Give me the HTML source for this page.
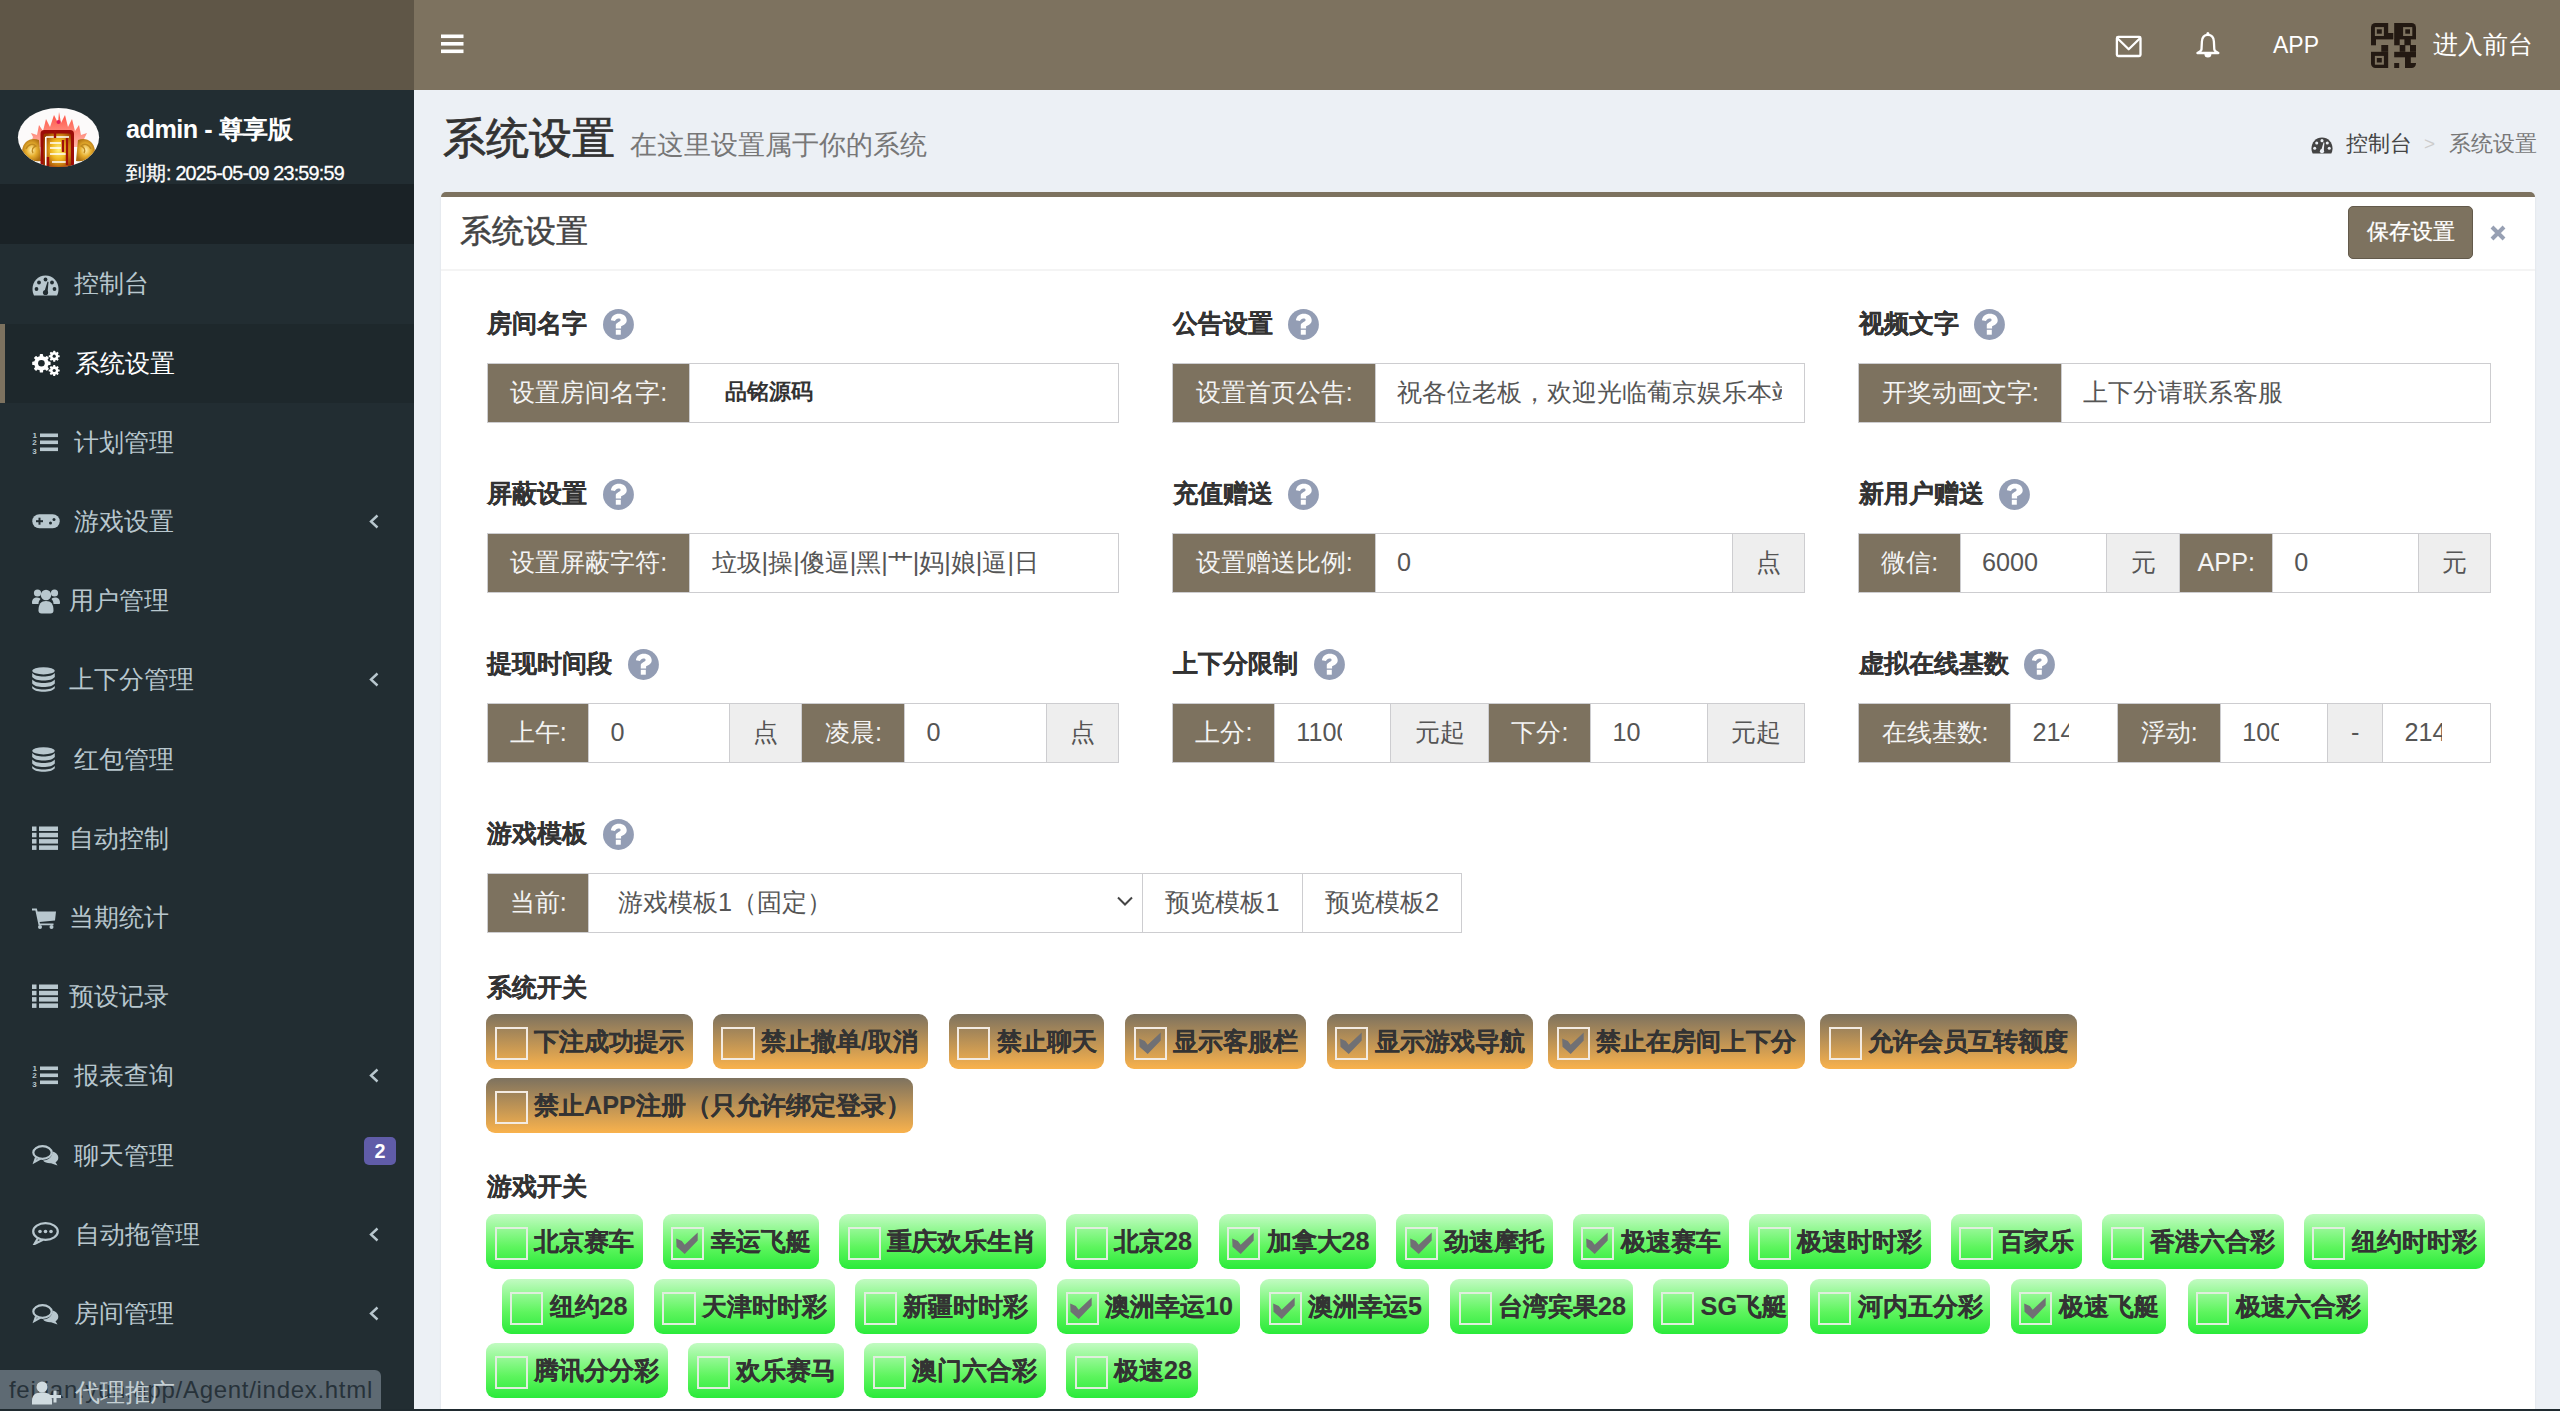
<!DOCTYPE html>
<html><head><meta charset="utf-8"><style>
*{box-sizing:border-box;margin:0;padding:0}
html,body{width:2560px;height:1411px;overflow:hidden;background:#ecf0f5;font-family:"Liberation Sans",sans-serif;color:#333;position:relative}
.a{position:absolute}
#logo{left:0;top:0;width:414px;height:90px;background:#5f5647}
#nav{left:414px;top:0;width:2146px;height:90px;background:#7d725f}
#side{left:0;top:90px;width:414px;height:1321px;background:#222d32}
#strip{left:0;top:184px;width:414px;height:60px;background:#1a2226}
.mi{position:absolute;left:0;width:414px;height:79.2px;color:#b8c7ce;font-size:25.2px;line-height:79.2px;white-space:nowrap}
.mi .t{position:absolute;top:0}
.mi svg{position:absolute}
.mi.act{background:#1e282c;color:#fff}
.mi.act:before{content:"";position:absolute;left:0;top:0;width:5.4px;height:100%;background:#7d725f}
#box{left:441px;top:191.7px;width:2093.6px;height:1300px;background:#fff;border-top:5.4px solid #7d725f;border-radius:5px 5px 0 0;box-shadow:0 1.8px 1.8px rgba(0,0,0,0.1)}
.lbl{position:absolute;font-size:25.2px;font-weight:bold;color:#333;-webkit-text-stroke:0.15px #333;line-height:30px;white-space:nowrap}
.q{position:absolute}
.ig>div{position:absolute;height:60px;border:1.8px solid #cdcdd0;font-size:25.2px;line-height:56px;white-space:nowrap;overflow:hidden}
.ad{background:#7d725f;color:#f4f4f4;text-align:center}
.ip{background:#fff;color:#555}
.gy{background:#eee;color:#555;text-align:center}
.tg{position:absolute;height:54.7px;border-radius:9px;font-size:25.2px;font-weight:bold;color:#333;-webkit-text-stroke:0.1px #333;line-height:54.7px;white-space:nowrap}
.tg.o{background:linear-gradient(to bottom,#7d725f 0%,#f9b24c 100%)}
.tg.g{background:linear-gradient(to bottom,#c2fbc2 0%,#5ef55e 60%,#2aea3a 100%)}
.tg .cb{position:absolute;left:8.5px;top:13.2px;width:33.3px;height:32.6px;border:2.2px solid #f3ebe2}
.tg.g .cb{border-color:#dfeedd}
.tg .tx{position:absolute;left:48px;top:0}
</style></head><body>
<div id="logo" class="a"></div><div id="nav" class="a"></div>
<svg class="a" style="left:441px;top:34px" width="23" height="20" viewBox="0 0 23 20"><rect x="0" y="0.5" width="22.5" height="3.6" fill="#fff"/><rect x="0" y="8" width="22.5" height="3.6" fill="#fff"/><rect x="0" y="15.5" width="22.5" height="3.6" fill="#fff"/></svg>
<svg class="a" style="left:2115px;top:35px" width="28" height="23" viewBox="0 0 28 23"><rect x="1.9" y="1.9" width="23.6" height="19.1" rx="1.3" fill="none" stroke="#fff" stroke-width="2.3"/><path d="M2.4 3.2 L13.7 14.3 L25 3.2" fill="none" stroke="#fff" stroke-width="2.3" stroke-linejoin="round"/></svg>
<svg class="a" style="left:2195px;top:31px" width="27" height="28" viewBox="0 0 27 28"><path d="M12.9 3.8 C9.2 3.8 7.1 6.2 6.9 10.5 L6.5 18.3 C6.3 19.8 4.3 21 2.4 22 L23.4 22 C21.5 21 19.5 19.8 19.3 18.3 L18.9 10.5 C18.7 6.2 16.6 3.8 12.9 3.8 Z" fill="none" stroke="#fff" stroke-width="2.3" stroke-linejoin="round"/><circle cx="12.9" cy="2.6" r="1.5" fill="#fff"/><path d="M9.4 23 A3.5 3.5 0 0 0 16.4 23 Z" fill="#fff"/></svg>
<div class="a" style="left:2273px;top:29px;font-size:23px;line-height:32px;color:#fff">APP</div>
<svg class="a" style="left:2371px;top:23px" width="45" height="45" viewBox="0 0 45 45"><defs><clipPath id="qc"><rect x="0" y="0" width="45" height="45" rx="4.5"/></clipPath></defs><g clip-path="url(#qc)" fill="#231912">
<rect x="0" y="0" width="17.2" height="10"/><rect x="0" y="10" width="22.3" height="6.4"/><rect x="0" y="16" width="5" height="6.3"/>
<rect x="23.2" y="0" width="21.8" height="16.4"/><rect x="23.2" y="16" width="5.5" height="6.3"/><rect x="33.4" y="16" width="6.4" height="6.3"/>
<rect x="10.3" y="22" width="6.9" height="6.8"/><rect x="28.7" y="22" width="5.6" height="6.8"/><rect x="39" y="22" width="6" height="6.8"/>
<rect x="0" y="28.8" width="17.2" height="16.2"/>
<rect x="23.2" y="28.8" width="21.8" height="5.5"/><rect x="34" y="34" width="5.8" height="6.2"/><rect x="23.2" y="40" width="5" height="5"/><rect x="34" y="40" width="11" height="5"/>
</g><g fill="#7d725f"><rect x="3.9" y="4.1" width="9" height="8.9"/><rect x="32.1" y="4.1" width="9.2" height="8.9"/><rect x="3.9" y="32.9" width="9" height="8.8"/></g>
<g fill="#231912"><rect x="5.8" y="6.3" width="5" height="4.4"/><rect x="34.3" y="6.3" width="4.7" height="4.4"/><rect x="5.8" y="35" width="5" height="4.5"/></g></svg>
<div class="a" style="left:2433px;top:26px;font-size:25.2px;line-height:36px;color:#fff">进入前台</div>
<div id="side" class="a"></div><div id="strip" class="a"></div>
<svg class="a" style="left:17px;top:107px" width="83" height="61" viewBox="0 0 83 61">
<defs><clipPath id="avc"><ellipse cx="41.5" cy="30.5" rx="40.6" ry="29.6"/></clipPath>
<radialGradient id="gold" cx="55%" cy="45%" r="60%"><stop offset="0" stop-color="#fff27a"/><stop offset="0.45" stop-color="#f0b820"/><stop offset="1" stop-color="#9a3a00"/></radialGradient>
<linearGradient id="flm" x1="0" y1="0" x2="0" y2="1"><stop offset="0" stop-color="#ff3a2a"/><stop offset="1" stop-color="#ffb0a0"/></linearGradient>
<radialGradient id="orn" cx="50%" cy="50%" r="55%"><stop offset="0" stop-color="#fff0b0"/><stop offset="0.5" stop-color="#e8b030"/><stop offset="1" stop-color="#b07010"/></radialGradient></defs>
<g clip-path="url(#avc)">
<rect x="0" y="0" width="83" height="61" fill="#fcfafa"/>
<path d="M12 40 L16 30 L14 26 L20 28 L22 18 L26 24 L29 12 L33 20 L37 8 L41 16 L42 5 L44 16 L48 8 L51 20 L55 12 L58 24 L62 18 L64 28 L70 26 L67 32 L71 40 Z" fill="url(#flm)" opacity="0.9"/>
<path d="M5 44 C6 34 14 30 22 33 L24 54 C15 55 8 52 5 44 Z" fill="url(#orn)"/>
<path d="M78 44 C77 34 69 30 61 33 L59 54 C68 55 75 52 78 44 Z" fill="url(#orn)"/>
<path d="M9 42 C11 37 16 36 19 39 C16 40 14 43 16 46" stroke="#c08a20" stroke-width="1.4" fill="none"/>
<path d="M74 42 C72 37 67 36 64 39 C67 40 69 43 67 46" stroke="#c08a20" stroke-width="1.4" fill="none"/>
<rect x="23.5" y="23" width="33.5" height="40" rx="4" fill="#9c0c08"/>
<rect x="26.5" y="26.5" width="27.5" height="36" rx="2" fill="url(#gold)"/>
<path d="M28.8 30 L28.8 62 M28.8 30 L52 30 M33 36 L44 36 M33 41 L44 41 M33 47 L50 47 M35 55 L50 55" stroke="#fff" stroke-width="1.6" fill="none"/>
<path d="M38 24 L38 31 M46 33 L46 45 M50 31 L50 58 M31 50 L31 60" stroke="#a01008" stroke-width="2.4" fill="none"/>
<circle cx="41.5" cy="15" r="2" fill="#e0205a"/>
</g></svg>
<div class="a" style="left:126px;top:113px;font-size:25.2px;font-weight:bold;line-height:32px;color:#fff;white-space:nowrap;letter-spacing:-0.5px">admin - 尊享版</div>
<div class="a" style="left:126px;top:160px;font-size:19.8px;line-height:26px;color:#fff;white-space:nowrap;letter-spacing:-0.8px;-webkit-text-stroke:0.3px #fff"><span style="letter-spacing:0">到期</span>: 2025-05-09 23:59:59</div>
<div class="mi" style="top:244.3px"><span class="t" style="left:74px">控制台</span></div>
<svg class="a" style="left:32px;top:275.4px" width="27" height="21" viewBox="0 0 27 21"><path d="M13.5 0.5 C6 0.5 0.5 6.5 0.5 14 C0.5 16.5 1 18.5 2 20.5 L25 20.5 C26 18.5 26.5 16.5 26.5 14 C26.5 6.5 21 0.5 13.5 0.5 Z" fill="#b8c7ce"/><g fill="#222d32"><circle cx="4.5" cy="14" r="1.9"/><circle cx="7" cy="7.5" r="1.9"/><circle cx="13.5" cy="4.5" r="1.9"/><circle cx="20" cy="7.5" r="1.9"/><circle cx="22.5" cy="14" r="1.9"/><path d="M12 18 L15.5 6.5 L16.5 7 L15.5 18.5 Z"/><circle cx="13.5" cy="17.5" r="2.6"/></g></svg>
<div class="mi act" style="top:323.5px"><span class="t" style="left:75px">系统设置</span></div>
<svg class="a" style="left:32px;top:350.1px" width="28" height="26" viewBox="0 0 28 26"><circle cx="9.4" cy="13.3" r="7.3" fill="#fff"/><rect x="7.70" y="4.10" width="3.4" height="3.40" rx="0.85" fill="#fff" transform="rotate(0.0 9.4 13.3)"/><rect x="7.70" y="4.10" width="3.4" height="3.40" rx="0.85" fill="#fff" transform="rotate(45.0 9.4 13.3)"/><rect x="7.70" y="4.10" width="3.4" height="3.40" rx="0.85" fill="#fff" transform="rotate(90.0 9.4 13.3)"/><rect x="7.70" y="4.10" width="3.4" height="3.40" rx="0.85" fill="#fff" transform="rotate(135.0 9.4 13.3)"/><rect x="7.70" y="4.10" width="3.4" height="3.40" rx="0.85" fill="#fff" transform="rotate(180.0 9.4 13.3)"/><rect x="7.70" y="4.10" width="3.4" height="3.40" rx="0.85" fill="#fff" transform="rotate(225.0 9.4 13.3)"/><rect x="7.70" y="4.10" width="3.4" height="3.40" rx="0.85" fill="#fff" transform="rotate(270.0 9.4 13.3)"/><rect x="7.70" y="4.10" width="3.4" height="3.40" rx="0.85" fill="#fff" transform="rotate(315.0 9.4 13.3)"/><circle cx="9.4" cy="13.3" r="3.3" fill="#1e282c"/><circle cx="22.2" cy="6.2" r="4.2" fill="#fff"/><rect x="21.15" y="0.70" width="2.1" height="2.80" rx="0.53" fill="#fff" transform="rotate(0.0 22.2 6.2)"/><rect x="21.15" y="0.70" width="2.1" height="2.80" rx="0.53" fill="#fff" transform="rotate(45.0 22.2 6.2)"/><rect x="21.15" y="0.70" width="2.1" height="2.80" rx="0.53" fill="#fff" transform="rotate(90.0 22.2 6.2)"/><rect x="21.15" y="0.70" width="2.1" height="2.80" rx="0.53" fill="#fff" transform="rotate(135.0 22.2 6.2)"/><rect x="21.15" y="0.70" width="2.1" height="2.80" rx="0.53" fill="#fff" transform="rotate(180.0 22.2 6.2)"/><rect x="21.15" y="0.70" width="2.1" height="2.80" rx="0.53" fill="#fff" transform="rotate(225.0 22.2 6.2)"/><rect x="21.15" y="0.70" width="2.1" height="2.80" rx="0.53" fill="#fff" transform="rotate(270.0 22.2 6.2)"/><rect x="21.15" y="0.70" width="2.1" height="2.80" rx="0.53" fill="#fff" transform="rotate(315.0 22.2 6.2)"/><circle cx="22.2" cy="6.2" r="1.6" fill="#1e282c"/><circle cx="22.2" cy="20.5" r="4.2" fill="#fff"/><rect x="21.15" y="15.00" width="2.1" height="2.80" rx="0.53" fill="#fff" transform="rotate(0.0 22.2 20.5)"/><rect x="21.15" y="15.00" width="2.1" height="2.80" rx="0.53" fill="#fff" transform="rotate(45.0 22.2 20.5)"/><rect x="21.15" y="15.00" width="2.1" height="2.80" rx="0.53" fill="#fff" transform="rotate(90.0 22.2 20.5)"/><rect x="21.15" y="15.00" width="2.1" height="2.80" rx="0.53" fill="#fff" transform="rotate(135.0 22.2 20.5)"/><rect x="21.15" y="15.00" width="2.1" height="2.80" rx="0.53" fill="#fff" transform="rotate(180.0 22.2 20.5)"/><rect x="21.15" y="15.00" width="2.1" height="2.80" rx="0.53" fill="#fff" transform="rotate(225.0 22.2 20.5)"/><rect x="21.15" y="15.00" width="2.1" height="2.80" rx="0.53" fill="#fff" transform="rotate(270.0 22.2 20.5)"/><rect x="21.15" y="15.00" width="2.1" height="2.80" rx="0.53" fill="#fff" transform="rotate(315.0 22.2 20.5)"/><circle cx="22.2" cy="20.5" r="1.6" fill="#1e282c"/></svg>
<div class="mi" style="top:402.7px"><span class="t" style="left:74px">计划管理</span></div>
<svg class="a" style="left:32px;top:429.8px" width="26" height="25" viewBox="0 0 26 25"><g fill="#b8c7ce"><rect x="8" y="3.5" width="18" height="3.6"/><rect x="8" y="10.5" width="18" height="3.6"/><rect x="8" y="17.5" width="18" height="3.6"/></g><text x="0.5" y="7.5" font-size="8" font-weight="bold" fill="#b8c7ce" font-family="Liberation Sans">1</text><text x="0.3" y="15" font-size="8" font-weight="bold" fill="#b8c7ce" font-family="Liberation Sans">2</text><text x="0.3" y="23.5" font-size="8" font-weight="bold" fill="#b8c7ce" font-family="Liberation Sans">3</text></svg>
<div class="mi" style="top:481.9px"><span class="t" style="left:74px">游戏设置</span></div>
<svg class="a" style="left:32px;top:514.0px" width="28" height="15" viewBox="0 0 28 15"><rect x="0.3" y="0.3" width="27.4" height="14" rx="7" fill="#b8c7ce"/><g fill="#222d32"><rect x="4" y="6.2" width="7" height="2"/><rect x="6.5" y="3.7" width="2" height="7"/><circle cx="18.5" cy="9" r="1.5"/><circle cx="22" cy="5.5" r="1.5"/></g></svg>
<svg class="a" style="left:369px;top:514.0px" width="10" height="15" viewBox="0 0 10 15"><path d="M8.5 1.5 L2 7.5 L8.5 13.5" fill="none" stroke="#b8c7ce" stroke-width="2.4"/></svg>
<div class="mi" style="top:561.1px"><span class="t" style="left:69px">用户管理</span></div>
<svg class="a" style="left:31.5px;top:587.7px" width="28" height="26" viewBox="0 0 28 26"><g fill="#b8c7ce"><circle cx="5.5" cy="5" r="3.6"/><circle cx="22.5" cy="5" r="3.6"/><path d="M0 15 C0 11 2 9.5 5 9.5 C7 9.5 8 10.5 8.5 11 C7 12.5 6.5 14.5 6.5 16 L1 16 C0.4 16 0 15.6 0 15 Z"/><path d="M28 15 C28 11 26 9.5 23 9.5 C21 9.5 20 10.5 19.5 11 C21 12.5 21.5 14.5 21.5 16 L27 16 C27.6 16 28 15.6 28 15 Z"/><circle cx="14" cy="7" r="5.2"/><path d="M6.5 22.5 C6.5 16 9 13 14 13 C19 13 21.5 16 21.5 22.5 C21.5 24.5 20.5 25.5 18.5 25.5 L9.5 25.5 C7.5 25.5 6.5 24.5 6.5 22.5 Z"/></g></svg>
<div class="mi" style="top:640.3px"><span class="t" style="left:69px">上下分管理</span></div>
<svg class="a" style="left:31.5px;top:667.4px" width="23" height="25" viewBox="0 0 23 25"><g fill="#b8c7ce"><ellipse cx="11.5" cy="3.8" rx="11.3" ry="3.6"/><path d="M0.2 6 C2 8.5 6.5 9.5 11.5 9.5 C16.5 9.5 21 8.5 22.8 6 L22.8 10 C21 12.5 16.5 13.5 11.5 13.5 C6.5 13.5 2 12.5 0.2 10 Z"/><path d="M0.2 12.5 C2 15 6.5 16 11.5 16 C16.5 16 21 15 22.8 12.5 L22.8 16.5 C21 19 16.5 20 11.5 20 C6.5 20 2 19 0.2 16.5 Z"/><path d="M0.2 19 C2 21.5 6.5 22.5 11.5 22.5 C16.5 22.5 21 21.5 22.8 19 L22.8 21.3 C21 23.8 16.5 24.8 11.5 24.8 C6.5 24.8 2 23.8 0.2 21.3 Z"/></g></svg>
<svg class="a" style="left:369px;top:672.4px" width="10" height="15" viewBox="0 0 10 15"><path d="M8.5 1.5 L2 7.5 L8.5 13.5" fill="none" stroke="#b8c7ce" stroke-width="2.4"/></svg>
<div class="mi" style="top:719.5px"><span class="t" style="left:74px">红包管理</span></div>
<svg class="a" style="left:31.5px;top:746.6px" width="23" height="25" viewBox="0 0 23 25"><g fill="#b8c7ce"><ellipse cx="11.5" cy="3.8" rx="11.3" ry="3.6"/><path d="M0.2 6 C2 8.5 6.5 9.5 11.5 9.5 C16.5 9.5 21 8.5 22.8 6 L22.8 10 C21 12.5 16.5 13.5 11.5 13.5 C6.5 13.5 2 12.5 0.2 10 Z"/><path d="M0.2 12.5 C2 15 6.5 16 11.5 16 C16.5 16 21 15 22.8 12.5 L22.8 16.5 C21 19 16.5 20 11.5 20 C6.5 20 2 19 0.2 16.5 Z"/><path d="M0.2 19 C2 21.5 6.5 22.5 11.5 22.5 C16.5 22.5 21 21.5 22.8 19 L22.8 21.3 C21 23.8 16.5 24.8 11.5 24.8 C6.5 24.8 2 23.8 0.2 21.3 Z"/></g></svg>
<div class="mi" style="top:798.7px"><span class="t" style="left:69px">自动控制</span></div>
<svg class="a" style="left:32px;top:825.8px" width="26" height="25" viewBox="0 0 26 25"><g fill="#b8c7ce"><rect x="0" y="0.5" width="4.5" height="4.5"/><rect x="7" y="0.5" width="19" height="4.5"/><rect x="0" y="6.8" width="4.5" height="4.5"/><rect x="7" y="6.8" width="19" height="4.5"/><rect x="0" y="13.1" width="4.5" height="4.5"/><rect x="7" y="13.1" width="19" height="4.5"/><rect x="0" y="19.4" width="4.5" height="4.5"/><rect x="7" y="19.4" width="19" height="4.5"/></g></svg>
<div class="mi" style="top:877.9px"><span class="t" style="left:69px">当期统计</span></div>
<svg class="a" style="left:32px;top:907.5px" width="24" height="21" viewBox="0 0 24 21"><g fill="#b8c7ce"><path d="M0 0.5 L4.8 0.5 L5.6 3.5 L24 3.5 L23 12.5 L7.6 14 L8 15.5 L21.5 15.5 L21.5 17.3 L6.6 17.3 L3.4 2.6 L0 2.6 Z"/><circle cx="8" cy="19" r="2"/><circle cx="19.5" cy="19" r="2"/></g></svg>
<div class="mi" style="top:957.1px"><span class="t" style="left:69px">预设记录</span></div>
<svg class="a" style="left:32px;top:984.2px" width="26" height="25" viewBox="0 0 26 25"><g fill="#b8c7ce"><rect x="0" y="0.5" width="4.5" height="4.5"/><rect x="7" y="0.5" width="19" height="4.5"/><rect x="0" y="6.8" width="4.5" height="4.5"/><rect x="7" y="6.8" width="19" height="4.5"/><rect x="0" y="13.1" width="4.5" height="4.5"/><rect x="7" y="13.1" width="19" height="4.5"/><rect x="0" y="19.4" width="4.5" height="4.5"/><rect x="7" y="19.4" width="19" height="4.5"/></g></svg>
<div class="mi" style="top:1036.3px"><span class="t" style="left:74px">报表查询</span></div>
<svg class="a" style="left:32px;top:1063.4px" width="26" height="25" viewBox="0 0 26 25"><g fill="#b8c7ce"><rect x="8" y="3.5" width="18" height="3.6"/><rect x="8" y="10.5" width="18" height="3.6"/><rect x="8" y="17.5" width="18" height="3.6"/></g><text x="0.5" y="7.5" font-size="8" font-weight="bold" fill="#b8c7ce" font-family="Liberation Sans">1</text><text x="0.3" y="15" font-size="8" font-weight="bold" fill="#b8c7ce" font-family="Liberation Sans">2</text><text x="0.3" y="23.5" font-size="8" font-weight="bold" fill="#b8c7ce" font-family="Liberation Sans">3</text></svg>
<svg class="a" style="left:369px;top:1068.4px" width="10" height="15" viewBox="0 0 10 15"><path d="M8.5 1.5 L2 7.5 L8.5 13.5" fill="none" stroke="#b8c7ce" stroke-width="2.4"/></svg>
<div class="mi" style="top:1115.5px"><span class="t" style="left:74px">聊天管理</span></div>
<svg class="a" style="left:32px;top:1145.1px" width="27" height="21" viewBox="0 0 27 21"><g fill="none" stroke="#b8c7ce" stroke-width="2.2"><ellipse cx="10.5" cy="7.5" rx="9.2" ry="6.3"/><path d="M4 12.5 L2.5 17 L8.5 13.6"/></g><path d="M20.5 6.5 C25 8 26.5 10.5 26.3 13 C26.2 15 25 16.5 23.5 17.3 L25.5 20.5 L19 18.2 C16 18.5 12.5 17.5 11 15.5 C15.5 15.5 20.5 12.5 20.5 6.5 Z" fill="#b8c7ce"/></svg>
<div class="a" style="left:364px;top:1137.1px;width:32px;height:28.3px;border-radius:5px;background:#605ca8;color:#fff;font-size:19.8px;font-weight:bold;text-align:center;line-height:28.3px">2</div>
<div class="mi" style="top:1194.7px"><span class="t" style="left:75px">自动拖管理</span></div>
<svg class="a" style="left:32px;top:1222.3px" width="27" height="23" viewBox="0 0 27 23"><g fill="none" stroke="#b8c7ce" stroke-width="2.2"><ellipse cx="13.5" cy="9.5" rx="12.3" ry="8.3"/><path d="M6 16 L2.5 22 L11 17.8"/></g><g fill="#b8c7ce"><circle cx="8" cy="9.5" r="1.8"/><circle cx="13.5" cy="9.5" r="1.8"/><circle cx="19" cy="9.5" r="1.8"/></g></svg>
<svg class="a" style="left:369px;top:1226.8px" width="10" height="15" viewBox="0 0 10 15"><path d="M8.5 1.5 L2 7.5 L8.5 13.5" fill="none" stroke="#b8c7ce" stroke-width="2.4"/></svg>
<div class="mi" style="top:1273.9px"><span class="t" style="left:74px">房间管理</span></div>
<svg class="a" style="left:32px;top:1303.5px" width="27" height="21" viewBox="0 0 27 21"><g fill="none" stroke="#b8c7ce" stroke-width="2.2"><ellipse cx="10.5" cy="7.5" rx="9.2" ry="6.3"/><path d="M4 12.5 L2.5 17 L8.5 13.6"/></g><path d="M20.5 6.5 C25 8 26.5 10.5 26.3 13 C26.2 15 25 16.5 23.5 17.3 L25.5 20.5 L19 18.2 C16 18.5 12.5 17.5 11 15.5 C15.5 15.5 20.5 12.5 20.5 6.5 Z" fill="#b8c7ce"/></svg>
<svg class="a" style="left:369px;top:1306.0px" width="10" height="15" viewBox="0 0 10 15"><path d="M8.5 1.5 L2 7.5 L8.5 13.5" fill="none" stroke="#b8c7ce" stroke-width="2.4"/></svg>
<div class="mi" style="top:1353.1px"><span class="t" style="left:75px">代理推广</span></div>
<svg class="a" style="left:32px;top:1380.7px" width="30" height="24" viewBox="0 0 30 24"><g fill="#b8c7ce"><circle cx="10" cy="6" r="5.5"/><path d="M0 20 C0 14 3 11.5 10 11.5 C17 11.5 20 14 20 20 L20 23.5 L0 23.5 Z"/><rect x="17" y="14" width="12" height="3"/><rect x="21.5" y="9.5" width="3" height="12"/></g></svg>
<div class="a" style="left:0;top:1370px;width:381px;height:41px;background:#5e6a73;border-top-right-radius:6px"></div>
<div class="a" style="left:9px;top:1374px;font-size:24px;line-height:32px;color:#27323a;white-space:nowrap;letter-spacing:0.7px">feitian.yun.app/Agent/index.html</div>
<div class="a" style="left:443px;top:112px;font-size:43.2px;line-height:52px;color:#333;white-space:nowrap;-webkit-text-stroke:0.8px #333">系统设置</div>
<div class="a" style="left:630px;top:127px;font-size:27px;line-height:36px;color:#777;white-space:nowrap">在这里设置属于你的系统</div>
<svg class="a" style="left:2311px;top:137px" width="22" height="17" viewBox="0 0 27 21"><path d="M13.5 0.5 C6 0.5 0.5 6.5 0.5 14 C0.5 16.5 1 18.5 2 20.5 L25 20.5 C26 18.5 26.5 16.5 26.5 14 C26.5 6.5 21 0.5 13.5 0.5 Z" fill="#444"/><g fill="#ecf0f5"><circle cx="4.5" cy="14" r="1.9"/><circle cx="7" cy="7.5" r="1.9"/><circle cx="13.5" cy="4.5" r="1.9"/><circle cx="20" cy="7.5" r="1.9"/><circle cx="22.5" cy="14" r="1.9"/><path d="M12 18 L15.5 6.5 L16.5 7 L15.5 18.5 Z"/><circle cx="13.5" cy="17.5" r="2.6"/></g></svg>
<div class="a" style="left:2346px;top:129px;font-size:21.6px;line-height:30px;color:#444;white-space:nowrap">控制台</div>
<div class="a" style="left:2424px;top:129px;font-size:19px;line-height:30px;color:#ccc">&gt;</div>
<div class="a" style="left:2449px;top:129px;font-size:21.6px;line-height:30px;color:#777;white-space:nowrap">系统设置</div>
<div id="box" class="a"></div>
<div class="a" style="left:441px;top:269px;width:2093.6px;height:1.8px;background:#f4f4f4"></div>
<div class="a" style="left:460px;top:212px;font-size:32.4px;line-height:38px;color:#444;white-space:nowrap;-webkit-text-stroke:0.5px #444">系统设置</div>
<div class="a" style="left:2348px;top:206px;width:125px;height:53px;background:#7d725f;border:1.8px solid #635a4b;border-radius:5px;color:#fff;font-size:21.6px;line-height:49px;text-align:center;-webkit-text-stroke:0.3px #fff">保存设置</div>
<svg class="a" style="left:2490px;top:225px" width="16" height="16" viewBox="0 0 16 16"><path d="M2 2 L14 14 M14 2 L2 14" stroke="#97a0b3" stroke-width="4" stroke-linecap="butt"/></svg>
<div class="lbl" style="left:487.0px;top:308px">房间名字</div>
<svg class="a" style="left:602.6px;top:309.2px" width="31" height="31" viewBox="0 0 31 31"><circle cx="15.45" cy="15.45" r="15.45" fill="#939db4"/><path d="M7.9 11.3 C8.6 7 11.6 4.7 15.8 4.7 C20.3 4.7 23.7 7.4 23.7 11.2 C23.7 14.6 21 15.8 18.1 17.2 L18.1 19.4 L12.8 19.4 L12.8 16 C12.8 13.5 17.6 12.8 17.6 10.9 C17.6 10 16.7 9.6 15.4 9.6 C13.8 9.6 12.8 10.5 11.9 12 Z" fill="#fff"/><rect x="12.8" y="20.8" width="5" height="4.9" fill="#fff"/></svg>
<div class="lbl" style="left:1172.9px;top:308px">公告设置</div>
<svg class="a" style="left:1288.4px;top:309.2px" width="31" height="31" viewBox="0 0 31 31"><circle cx="15.45" cy="15.45" r="15.45" fill="#939db4"/><path d="M7.9 11.3 C8.6 7 11.6 4.7 15.8 4.7 C20.3 4.7 23.7 7.4 23.7 11.2 C23.7 14.6 21 15.8 18.1 17.2 L18.1 19.4 L12.8 19.4 L12.8 16 C12.8 13.5 17.6 12.8 17.6 10.9 C17.6 10 16.7 9.6 15.4 9.6 C13.8 9.6 12.8 10.5 11.9 12 Z" fill="#fff"/><rect x="12.8" y="20.8" width="5" height="4.9" fill="#fff"/></svg>
<div class="lbl" style="left:1858.8px;top:308px">视频文字</div>
<svg class="a" style="left:1974.4px;top:309.2px" width="31" height="31" viewBox="0 0 31 31"><circle cx="15.45" cy="15.45" r="15.45" fill="#939db4"/><path d="M7.9 11.3 C8.6 7 11.6 4.7 15.8 4.7 C20.3 4.7 23.7 7.4 23.7 11.2 C23.7 14.6 21 15.8 18.1 17.2 L18.1 19.4 L12.8 19.4 L12.8 16 C12.8 13.5 17.6 12.8 17.6 10.9 C17.6 10 16.7 9.6 15.4 9.6 C13.8 9.6 12.8 10.5 11.9 12 Z" fill="#fff"/><rect x="12.8" y="20.8" width="5" height="4.9" fill="#fff"/></svg>
<div class="lbl" style="left:487.0px;top:478px">屏蔽设置</div>
<svg class="a" style="left:602.6px;top:479.2px" width="31" height="31" viewBox="0 0 31 31"><circle cx="15.45" cy="15.45" r="15.45" fill="#939db4"/><path d="M7.9 11.3 C8.6 7 11.6 4.7 15.8 4.7 C20.3 4.7 23.7 7.4 23.7 11.2 C23.7 14.6 21 15.8 18.1 17.2 L18.1 19.4 L12.8 19.4 L12.8 16 C12.8 13.5 17.6 12.8 17.6 10.9 C17.6 10 16.7 9.6 15.4 9.6 C13.8 9.6 12.8 10.5 11.9 12 Z" fill="#fff"/><rect x="12.8" y="20.8" width="5" height="4.9" fill="#fff"/></svg>
<div class="lbl" style="left:1172.9px;top:478px">充值赠送</div>
<svg class="a" style="left:1288.4px;top:479.2px" width="31" height="31" viewBox="0 0 31 31"><circle cx="15.45" cy="15.45" r="15.45" fill="#939db4"/><path d="M7.9 11.3 C8.6 7 11.6 4.7 15.8 4.7 C20.3 4.7 23.7 7.4 23.7 11.2 C23.7 14.6 21 15.8 18.1 17.2 L18.1 19.4 L12.8 19.4 L12.8 16 C12.8 13.5 17.6 12.8 17.6 10.9 C17.6 10 16.7 9.6 15.4 9.6 C13.8 9.6 12.8 10.5 11.9 12 Z" fill="#fff"/><rect x="12.8" y="20.8" width="5" height="4.9" fill="#fff"/></svg>
<div class="lbl" style="left:1858.8px;top:478px">新用户赠送</div>
<svg class="a" style="left:1999px;top:479.2px" width="31" height="31" viewBox="0 0 31 31"><circle cx="15.45" cy="15.45" r="15.45" fill="#939db4"/><path d="M7.9 11.3 C8.6 7 11.6 4.7 15.8 4.7 C20.3 4.7 23.7 7.4 23.7 11.2 C23.7 14.6 21 15.8 18.1 17.2 L18.1 19.4 L12.8 19.4 L12.8 16 C12.8 13.5 17.6 12.8 17.6 10.9 C17.6 10 16.7 9.6 15.4 9.6 C13.8 9.6 12.8 10.5 11.9 12 Z" fill="#fff"/><rect x="12.8" y="20.8" width="5" height="4.9" fill="#fff"/></svg>
<div class="lbl" style="left:487.0px;top:648px">提现时间段</div>
<svg class="a" style="left:627.8px;top:649.2px" width="31" height="31" viewBox="0 0 31 31"><circle cx="15.45" cy="15.45" r="15.45" fill="#939db4"/><path d="M7.9 11.3 C8.6 7 11.6 4.7 15.8 4.7 C20.3 4.7 23.7 7.4 23.7 11.2 C23.7 14.6 21 15.8 18.1 17.2 L18.1 19.4 L12.8 19.4 L12.8 16 C12.8 13.5 17.6 12.8 17.6 10.9 C17.6 10 16.7 9.6 15.4 9.6 C13.8 9.6 12.8 10.5 11.9 12 Z" fill="#fff"/><rect x="12.8" y="20.8" width="5" height="4.9" fill="#fff"/></svg>
<div class="lbl" style="left:1172.9px;top:648px">上下分限制</div>
<svg class="a" style="left:1313.9px;top:649.2px" width="31" height="31" viewBox="0 0 31 31"><circle cx="15.45" cy="15.45" r="15.45" fill="#939db4"/><path d="M7.9 11.3 C8.6 7 11.6 4.7 15.8 4.7 C20.3 4.7 23.7 7.4 23.7 11.2 C23.7 14.6 21 15.8 18.1 17.2 L18.1 19.4 L12.8 19.4 L12.8 16 C12.8 13.5 17.6 12.8 17.6 10.9 C17.6 10 16.7 9.6 15.4 9.6 C13.8 9.6 12.8 10.5 11.9 12 Z" fill="#fff"/><rect x="12.8" y="20.8" width="5" height="4.9" fill="#fff"/></svg>
<div class="lbl" style="left:1858.8px;top:648px">虚拟在线基数</div>
<svg class="a" style="left:2024px;top:649.2px" width="31" height="31" viewBox="0 0 31 31"><circle cx="15.45" cy="15.45" r="15.45" fill="#939db4"/><path d="M7.9 11.3 C8.6 7 11.6 4.7 15.8 4.7 C20.3 4.7 23.7 7.4 23.7 11.2 C23.7 14.6 21 15.8 18.1 17.2 L18.1 19.4 L12.8 19.4 L12.8 16 C12.8 13.5 17.6 12.8 17.6 10.9 C17.6 10 16.7 9.6 15.4 9.6 C13.8 9.6 12.8 10.5 11.9 12 Z" fill="#fff"/><rect x="12.8" y="20.8" width="5" height="4.9" fill="#fff"/></svg>
<div class="lbl" style="left:487px;top:818px">游戏模板</div>
<svg class="a" style="left:602.8px;top:819.2px" width="31" height="31" viewBox="0 0 31 31"><circle cx="15.45" cy="15.45" r="15.45" fill="#939db4"/><path d="M7.9 11.3 C8.6 7 11.6 4.7 15.8 4.7 C20.3 4.7 23.7 7.4 23.7 11.2 C23.7 14.6 21 15.8 18.1 17.2 L18.1 19.4 L12.8 19.4 L12.8 16 C12.8 13.5 17.6 12.8 17.6 10.9 C17.6 10 16.7 9.6 15.4 9.6 C13.8 9.6 12.8 10.5 11.9 12 Z" fill="#fff"/><rect x="12.8" y="20.8" width="5" height="4.9" fill="#fff"/></svg>
<div class="ig"><div class="ad" style="left:486.5px;top:362.5px;width:204.3px;">设置房间名字:</div><div class="ip" style="left:689px;top:362.5px;width:430.3px;font-weight:bold;color:#333;font-size:21.6px"><span style="position:absolute;left:35px;right:21.6px;top:0;bottom:0;overflow:hidden">品铭源码</span></div></div>
<div class="ig"><div class="ad" style="left:1172.4px;top:362.5px;width:203.9px;">设置首页公告:</div><div class="ip" style="left:1374.5px;top:362.5px;width:430.3px;"><span style="position:absolute;left:21.6px;right:21.6px;top:0;bottom:0;overflow:hidden">祝各位老板，欢迎光临葡京娱乐本站，祝您游戏愉快</span></div></div>
<div class="ig"><div class="ad" style="left:1858.3px;top:362.5px;width:204.2px;">开奖动画文字:</div><div class="ip" style="left:2060.7px;top:362.5px;width:430.7px;"><span style="position:absolute;left:21.6px;right:21.6px;top:0;bottom:0;overflow:hidden">上下分请联系客服</span></div></div>
<div class="ig"><div class="ad" style="left:486.5px;top:532.6px;width:204.3px;">设置屏蔽字符:</div><div class="ip" style="left:689px;top:532.6px;width:430.3px;"><span style="position:absolute;left:21.6px;right:21.6px;top:0;bottom:0;overflow:hidden">垃圾|操|傻逼|黑|艹|妈|娘|逼|日</span></div></div>
<div class="ig"><div class="ad" style="left:1172.4px;top:532.6px;width:203.9px;">设置赠送比例:</div><div class="ip" style="left:1374.5px;top:532.6px;width:359.3px;"><span style="position:absolute;left:21.6px;right:48.6px;top:0;bottom:0;overflow:hidden">0</span></div><div class="gy" style="left:1732px;top:532.6px;width:72.8px;">点</div></div>
<div class="ig"><div class="ad" style="left:1858.3px;top:532.6px;width:103.0px;">微信:</div><div class="ip" style="left:1959.5px;top:532.6px;width:148.0px;"><span style="position:absolute;left:21.6px;right:48.6px;top:0;bottom:0;overflow:hidden">6000</span></div><div class="gy" style="left:2105.7px;top:532.6px;width:75.1px;">元</div><div class="ad" style="left:2179px;top:532.6px;width:94.5px;">APP:</div><div class="ip" style="left:2271.7px;top:532.6px;width:148.1px;"><span style="position:absolute;left:21.6px;right:48.6px;top:0;bottom:0;overflow:hidden">0</span></div><div class="gy" style="left:2418px;top:532.6px;width:73.4px;">元</div></div>
<div class="ig"><div class="ad" style="left:486.5px;top:702.7px;width:103.3px;">上午:</div><div class="ip" style="left:588px;top:702.7px;width:142.8px;"><span style="position:absolute;left:21.6px;right:48.6px;top:0;bottom:0;overflow:hidden">0</span></div><div class="gy" style="left:729px;top:702.7px;width:73.8px;">点</div><div class="ad" style="left:801px;top:702.7px;width:104.8px;">凌晨:</div><div class="ip" style="left:904px;top:702.7px;width:143.8px;"><span style="position:absolute;left:21.6px;right:48.6px;top:0;bottom:0;overflow:hidden">0</span></div><div class="gy" style="left:1046px;top:702.7px;width:73.3px;">点</div></div>
<div class="ig"><div class="ad" style="left:1172.4px;top:702.7px;width:103.1px;">上分:</div><div class="ip" style="left:1273.7px;top:702.7px;width:118.1px;"><span style="position:absolute;left:21.6px;right:48.6px;top:0;bottom:0;overflow:hidden">1100</span></div><div class="gy" style="left:1390px;top:702.7px;width:99.8px;">元起</div><div class="ad" style="left:1488px;top:702.7px;width:103.8px;">下分:</div><div class="ip" style="left:1590px;top:702.7px;width:118.8px;"><span style="position:absolute;left:21.6px;right:48.6px;top:0;bottom:0;overflow:hidden">10</span></div><div class="gy" style="left:1707px;top:702.7px;width:97.8px;">元起</div></div>
<div class="ig"><div class="ad" style="left:1858.3px;top:702.7px;width:153.5px;">在线基数:</div><div class="ip" style="left:2010px;top:702.7px;width:108.8px;"><span style="position:absolute;left:21.6px;right:48.6px;top:0;bottom:0;overflow:hidden">2140</span></div><div class="ad" style="left:2117px;top:702.7px;width:104.4px;">浮动:</div><div class="ip" style="left:2219.6px;top:702.7px;width:108.7px;"><span style="position:absolute;left:21.6px;right:48.6px;top:0;bottom:0;overflow:hidden">100</span></div><div class="gy" style="left:2326.5px;top:702.7px;width:57.3px;">-</div><div class="ip" style="left:2382px;top:702.7px;width:109.4px;"><span style="position:absolute;left:21.6px;right:48.6px;top:0;bottom:0;overflow:hidden">2140</span></div></div>
<div class="ig"><div class="ad" style="left:486.5px;top:872.7px;width:103.3px;">当前:</div><div class="ip" style="left:588px;top:872.7px;width:555.4px;"><span style="position:absolute;left:29px;right:40px;top:0;bottom:0;overflow:hidden">游戏模板1（固定）</span></div><div class="gy" style="left:1141.6px;top:872.7px;width:161.8px;background:#fff;color:#555">预览模板1</div><div class="gy" style="left:1301.6px;top:872.7px;width:160.6px;background:#fff;color:#555">预览模板2</div></div>
<svg class="a" style="left:1117px;top:896px" width="16" height="10" viewBox="0 0 16 10"><path d="M1 1.5 L8 8.5 L15 1.5" fill="none" stroke="#444" stroke-width="2"/></svg>
<div class="lbl" style="left:487px;top:972px">系统开关</div>
<div class="lbl" style="left:487px;top:1171px">游戏开关</div>
<div class="tg o" style="left:486px;top:1014.2px;width:207.0px"><div class="cb"></div><span class="tx">下注成功提示</span></div>
<div class="tg o" style="left:712.8px;top:1014.2px;width:214.8px"><div class="cb"></div><span class="tx">禁止撤单/取消</span></div>
<div class="tg o" style="left:948.7px;top:1014.2px;width:155.3px"><div class="cb"></div><span class="tx">禁止聊天</span></div>
<div class="tg o" style="left:1125.4px;top:1014.2px;width:180.5px"><div class="cb"><svg style="position:absolute;left:-2.2px;top:-2.2px" width="33.3" height="32.6" viewBox="0 0 33.3 32.6"><path d="M5.2 11.6 L10.8 13.9 L13.7 17.8 L26.7 5.4 L26.7 13.5 L13.7 26.9 L5.5 19.7 Z" fill="#707074"/></svg></div><span class="tx">显示客服栏</span></div>
<div class="tg o" style="left:1326.6px;top:1014.2px;width:206.2px"><div class="cb"><svg style="position:absolute;left:-2.2px;top:-2.2px" width="33.3" height="32.6" viewBox="0 0 33.3 32.6"><path d="M5.2 11.6 L10.8 13.9 L13.7 17.8 L26.7 5.4 L26.7 13.5 L13.7 26.9 L5.5 19.7 Z" fill="#707074"/></svg></div><span class="tx">显示游戏导航</span></div>
<div class="tg o" style="left:1548.4px;top:1014.2px;width:256.6px"><div class="cb"><svg style="position:absolute;left:-2.2px;top:-2.2px" width="33.3" height="32.6" viewBox="0 0 33.3 32.6"><path d="M5.2 11.6 L10.8 13.9 L13.7 17.8 L26.7 5.4 L26.7 13.5 L13.7 26.9 L5.5 19.7 Z" fill="#707074"/></svg></div><span class="tx">禁止在房间上下分</span></div>
<div class="tg o" style="left:1820px;top:1014.2px;width:257.0px"><div class="cb"></div><span class="tx">允许会员互转额度</span></div>
<div class="tg o" style="left:486px;top:1078px;width:427.4px"><div class="cb"></div><span class="tx">禁止APP注册（只允许绑定登录）</span></div>
<div class="tg g" style="left:486px;top:1214px;width:156.5px"><div class="cb"></div><span class="tx">北京赛车</span></div>
<div class="tg g" style="left:662.6px;top:1214px;width:156.4px"><div class="cb"><svg style="position:absolute;left:-2.2px;top:-2.2px" width="33.3" height="32.6" viewBox="0 0 33.3 32.6"><path d="M5.2 11.6 L10.8 13.9 L13.7 17.8 L26.7 5.4 L26.7 13.5 L13.7 26.9 L5.5 19.7 Z" fill="#707074"/></svg></div><span class="tx">幸运飞艇</span></div>
<div class="tg g" style="left:839px;top:1214px;width:207.0px"><div class="cb"></div><span class="tx">重庆欢乐生肖</span></div>
<div class="tg g" style="left:1066px;top:1214px;width:132.0px"><div class="cb"></div><span class="tx">北京28</span></div>
<div class="tg g" style="left:1218.6px;top:1214px;width:157.2px"><div class="cb"><svg style="position:absolute;left:-2.2px;top:-2.2px" width="33.3" height="32.6" viewBox="0 0 33.3 32.6"><path d="M5.2 11.6 L10.8 13.9 L13.7 17.8 L26.7 5.4 L26.7 13.5 L13.7 26.9 L5.5 19.7 Z" fill="#707074"/></svg></div><span class="tx">加拿大28</span></div>
<div class="tg g" style="left:1396.3px;top:1214px;width:156.4px"><div class="cb"><svg style="position:absolute;left:-2.2px;top:-2.2px" width="33.3" height="32.6" viewBox="0 0 33.3 32.6"><path d="M5.2 11.6 L10.8 13.9 L13.7 17.8 L26.7 5.4 L26.7 13.5 L13.7 26.9 L5.5 19.7 Z" fill="#707074"/></svg></div><span class="tx">劲速摩托</span></div>
<div class="tg g" style="left:1572.7px;top:1214px;width:156.3px"><div class="cb"><svg style="position:absolute;left:-2.2px;top:-2.2px" width="33.3" height="32.6" viewBox="0 0 33.3 32.6"><path d="M5.2 11.6 L10.8 13.9 L13.7 17.8 L26.7 5.4 L26.7 13.5 L13.7 26.9 L5.5 19.7 Z" fill="#707074"/></svg></div><span class="tx">极速赛车</span></div>
<div class="tg g" style="left:1749px;top:1214px;width:181.6px"><div class="cb"></div><span class="tx">极速时时彩</span></div>
<div class="tg g" style="left:1950.8px;top:1214px;width:131.0px"><div class="cb"></div><span class="tx">百家乐</span></div>
<div class="tg g" style="left:2102px;top:1214px;width:181.6px"><div class="cb"></div><span class="tx">香港六合彩</span></div>
<div class="tg g" style="left:2303.7px;top:1214px;width:181.7px"><div class="cb"></div><span class="tx">纽约时时彩</span></div>
<div class="tg g" style="left:501.5px;top:1279px;width:132.2px"><div class="cb"></div><span class="tx">纽约28</span></div>
<div class="tg g" style="left:653.8px;top:1279px;width:181.2px"><div class="cb"></div><span class="tx">天津时时彩</span></div>
<div class="tg g" style="left:855.2px;top:1279px;width:181.6px"><div class="cb"></div><span class="tx">新疆时时彩</span></div>
<div class="tg g" style="left:1057px;top:1279px;width:183.0px"><div class="cb"><svg style="position:absolute;left:-2.2px;top:-2.2px" width="33.3" height="32.6" viewBox="0 0 33.3 32.6"><path d="M5.2 11.6 L10.8 13.9 L13.7 17.8 L26.7 5.4 L26.7 13.5 L13.7 26.9 L5.5 19.7 Z" fill="#707074"/></svg></div><span class="tx">澳洲幸运10</span></div>
<div class="tg g" style="left:1260px;top:1279px;width:169.0px"><div class="cb"><svg style="position:absolute;left:-2.2px;top:-2.2px" width="33.3" height="32.6" viewBox="0 0 33.3 32.6"><path d="M5.2 11.6 L10.8 13.9 L13.7 17.8 L26.7 5.4 L26.7 13.5 L13.7 26.9 L5.5 19.7 Z" fill="#707074"/></svg></div><span class="tx">澳洲幸运5</span></div>
<div class="tg g" style="left:1450px;top:1279px;width:183.0px"><div class="cb"></div><span class="tx">台湾宾果28</span></div>
<div class="tg g" style="left:1652.6px;top:1279px;width:135.4px"><div class="cb"></div><span class="tx">SG飞艇</span></div>
<div class="tg g" style="left:1809.5px;top:1279px;width:180.3px"><div class="cb"></div><span class="tx">河内五分彩</span></div>
<div class="tg g" style="left:2010.7px;top:1279px;width:155.3px"><div class="cb"><svg style="position:absolute;left:-2.2px;top:-2.2px" width="33.3" height="32.6" viewBox="0 0 33.3 32.6"><path d="M5.2 11.6 L10.8 13.9 L13.7 17.8 L26.7 5.4 L26.7 13.5 L13.7 26.9 L5.5 19.7 Z" fill="#707074"/></svg></div><span class="tx">极速飞艇</span></div>
<div class="tg g" style="left:2187.5px;top:1279px;width:180.9px"><div class="cb"></div><span class="tx">极速六合彩</span></div>
<div class="tg g" style="left:486px;top:1343.2px;width:181.8px"><div class="cb"></div><span class="tx">腾讯分分彩</span></div>
<div class="tg g" style="left:688px;top:1343.2px;width:155.9px"><div class="cb"></div><span class="tx">欢乐赛马</span></div>
<div class="tg g" style="left:864.3px;top:1343.2px;width:181.7px"><div class="cb"></div><span class="tx">澳门六合彩</span></div>
<div class="tg g" style="left:1066px;top:1343.2px;width:132.0px"><div class="cb"></div><span class="tx">极速28</span></div>
<div class="a" style="left:75px;top:1352.5px;font-size:25.2px;line-height:79.2px;color:#d9e2e6;opacity:0.85;white-space:nowrap">代理推广</div>
<svg class="a" style="left:32px;top:1380.5px" width="30" height="24" viewBox="0 0 30 24"><g fill="#d0dbe0"><circle cx="10" cy="6" r="5.5"/><path d="M0 20 C0 14 3 11.5 10 11.5 C17 11.5 20 14 20 20 L20 23.5 L0 23.5 Z"/><rect x="17" y="14" width="12" height="3"/><rect x="21.5" y="9.5" width="3" height="12"/></g></svg>
<div class="a" style="left:0;top:1409px;width:2560px;height:2px;background:#1f2a2f"></div>
</body></html>
